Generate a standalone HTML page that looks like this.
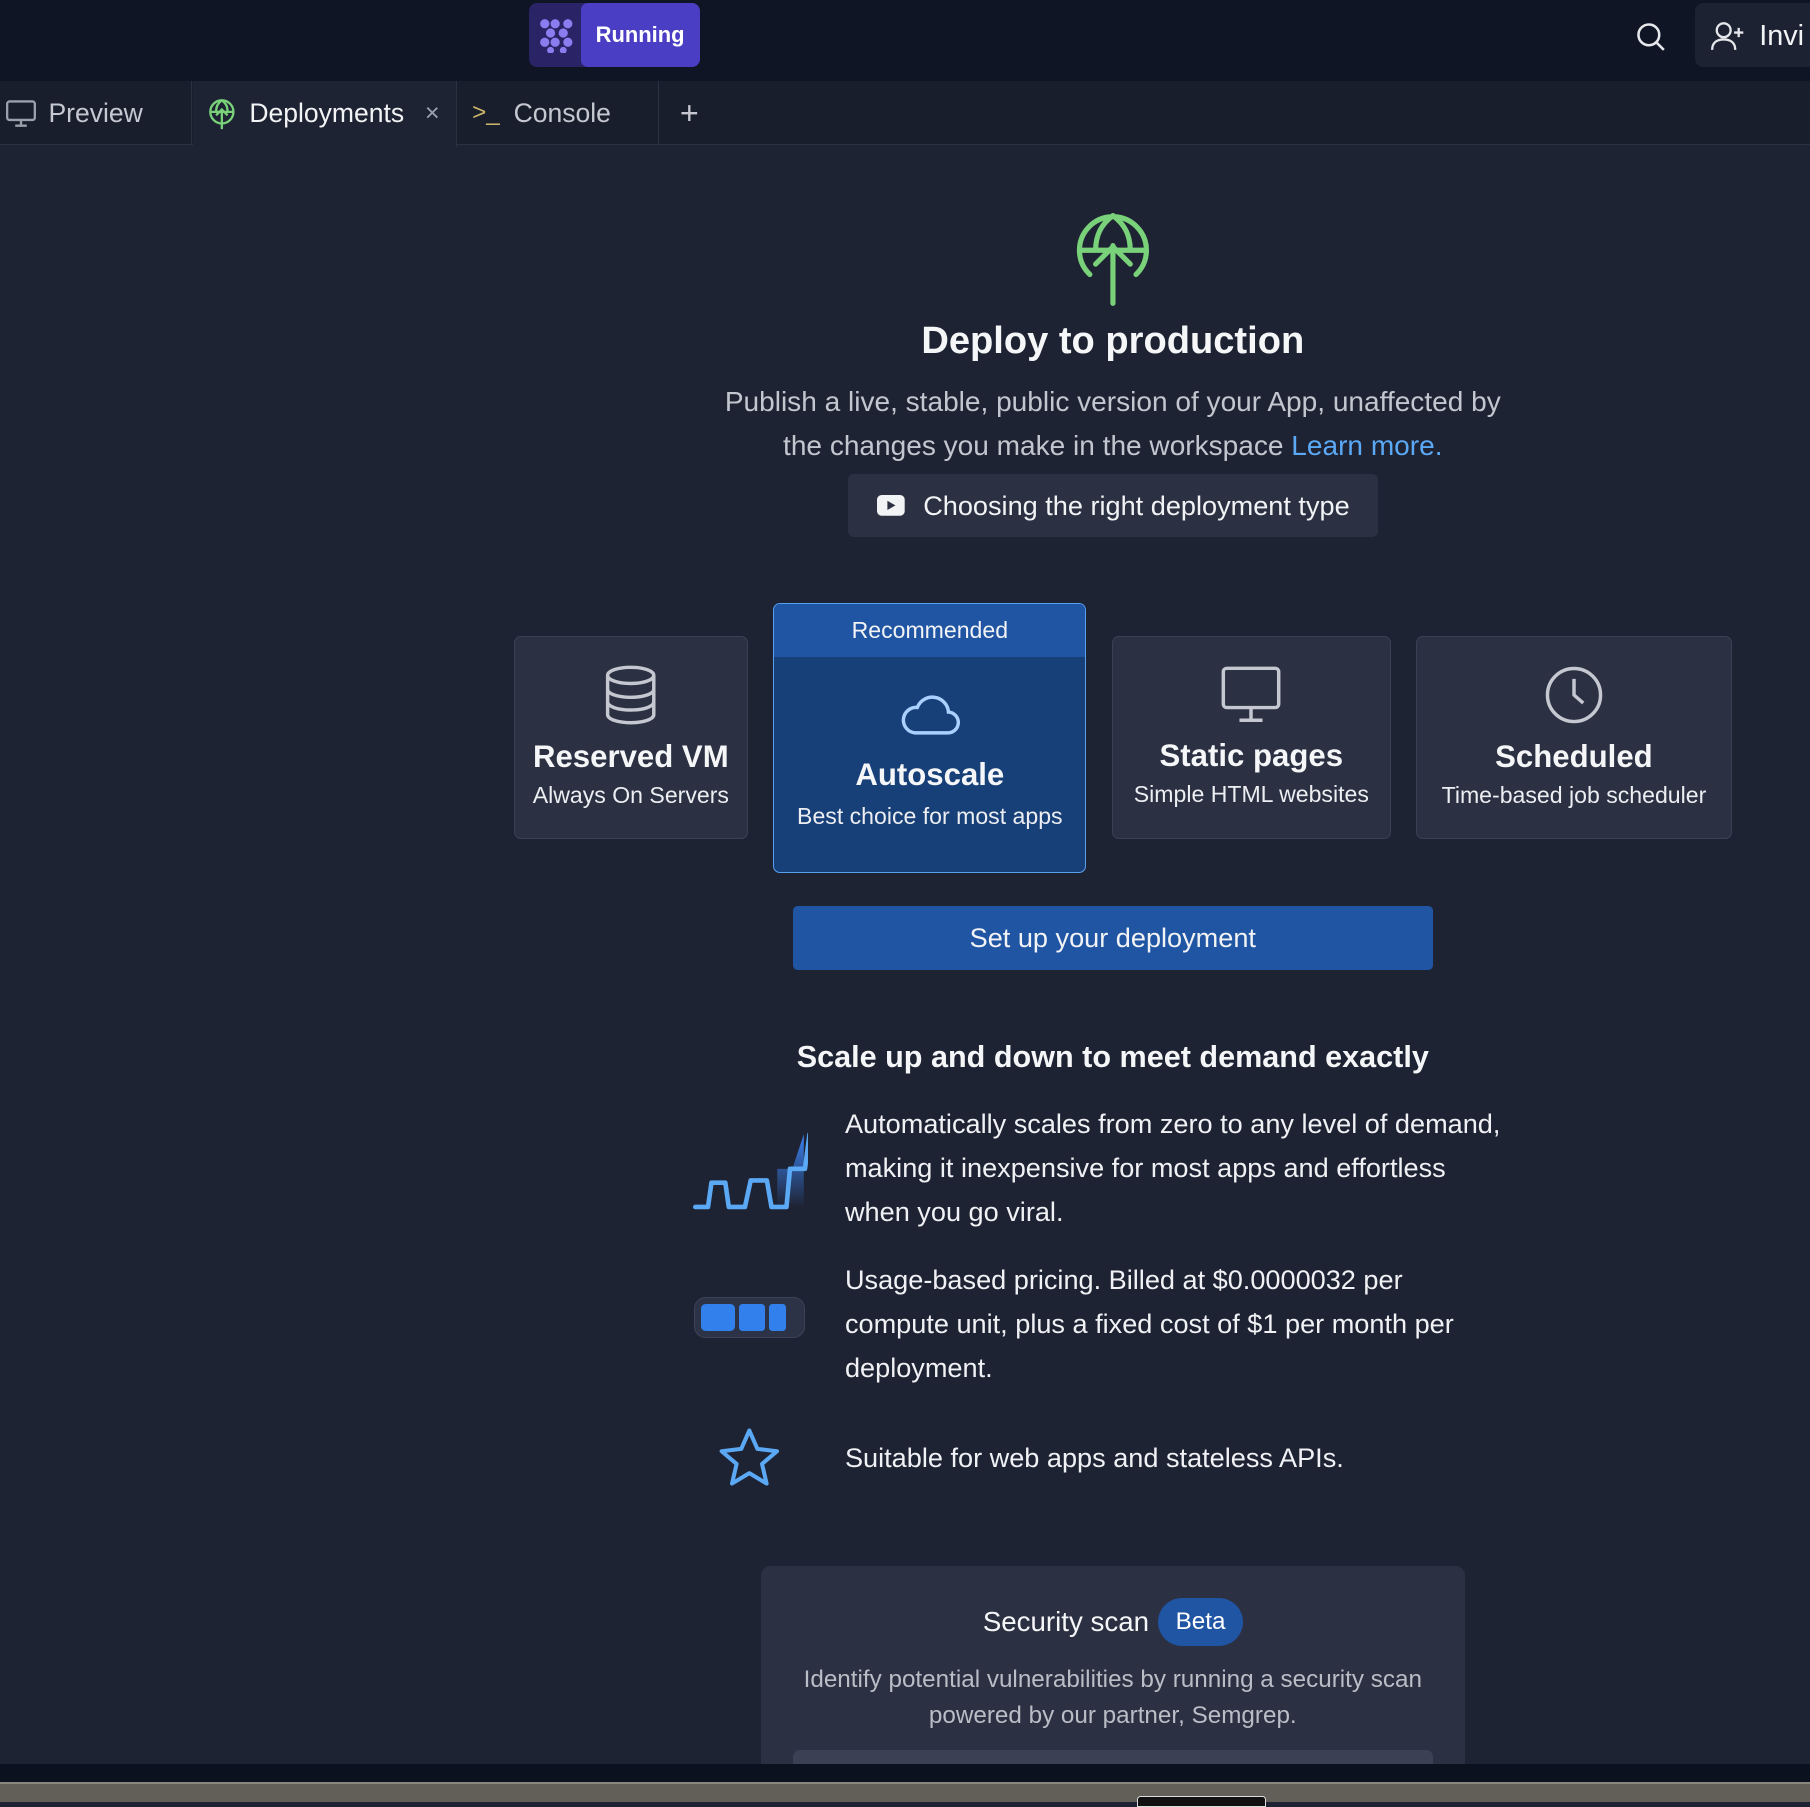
<!DOCTYPE html>
<html><head><meta charset="utf-8"><style>
html{zoom:1.15434}
body{margin:0;width:1568px;height:1561px;overflow:hidden;background:#1e2333;font-family:"Liberation Sans",sans-serif;color:#f2f3f5;position:relative}
.a{position:absolute}
.top{left:0;top:0;width:1568px;height:70px;background:#0f1524}
.tabs{left:0;top:70px;width:1568px;height:56px;background:#191e2c;border-bottom:1px solid #2b3142;box-sizing:border-box}
.tab{top:0;height:56px;display:flex;align-items:center;font-size:23px;color:#c5c8d0;box-sizing:border-box}
.c{text-align:center}
.card{background:#2b3042;border:1.5px solid #3b4154;border-radius:6px;box-sizing:border-box;text-align:center}
.card h3{margin:0;font-size:27px;font-weight:bold;color:#f5f6f8}
.card p{margin:6px 0 0;font-size:20px;color:#eceef2}
.feat{left:732px;font-size:23.5px;line-height:38px;color:#f0f1f4;width:575px}
</style></head><body>
<div class="a top"></div>
<div class="a" style="left:458px;top:3px;width:148px;height:55px;border-radius:7px;background:#2a2466;overflow:hidden">
 <div class="a" style="left:45px;top:0;width:103px;height:55px;background:#4a3fc4;border-radius:6px;color:#fff;font-weight:bold;font-size:19px;line-height:55px;text-align:center">Running</div>
 <svg class="a" style="left:9px;top:13px" width="30" height="30" viewBox="0 0 30 30" fill="#8b7cf0"><circle cx="5" cy="5" r="4"/><circle cx="14" cy="5" r="4"/><circle cx="25" cy="5" r="4"/><circle cx="10" cy="13" r="4"/><circle cx="21" cy="13" r="4"/><circle cx="5" cy="21" r="4"/><circle cx="14" cy="21" r="4"/><circle cx="25" cy="21" r="4"/><circle cx="10" cy="28" r="3"/><circle cx="21" cy="28" r="3"/></svg>
</div>
<svg class="a" style="left:1416px;top:18px" width="28" height="28" viewBox="0 0 28 28" fill="none" stroke="#e6e8ec" stroke-width="2.2"><circle cx="12" cy="12" r="9"/><path d="M19 19l6 6"/></svg>
<div class="a" style="left:1468px;top:3px;width:110px;height:55px;background:#1c2232;border-radius:7px"></div>
<svg class="a" style="left:1482px;top:18px" width="30" height="26" viewBox="0 0 30 26" fill="none" stroke="#e6e8ec" stroke-width="2"><circle cx="11" cy="8" r="6"/><path d="M1 25c0-6 4-9 10-9s10 3 10 9M24 6v8M20 10h8"/></svg>
<div class="a" style="left:1524px;top:17px;font-size:25px;color:#f2f3f5">Invi</div>

<div class="a tabs"></div>
<div class="a tab" style="left:0;top:70px;width:166px;border-right:1px solid #2b3142;padding-left:5px">
 <svg width="26" height="26" viewBox="0 0 26 26" fill="none" stroke="#9aa0ac" stroke-width="2"><rect x="1" y="3" width="24" height="16" rx="2"/><path d="M13 19v4M8 24h10"/></svg><span style="margin-left:11px">Preview</span></div>
<div class="a tab" style="left:167px;top:70px;width:229px;height:57px;background:#1e2333;border-right:1px solid #2b3142;padding-left:13px;color:#f2f3f5">
 <svg width="24" height="28" viewBox="0 0 24 28" fill="none" stroke="#79d279" stroke-width="2"><circle cx="12" cy="12" r="10"/><path d="M12 2c-4 3-5 6-5 10M12 2c4 3 5 6 5 10M2 12h20M12 27V10M7 15l5-5 5 5"/></svg><span style="margin-left:12px">Deployments</span><span style="margin-left:18px;color:#9aa0ac;font-size:22px">×</span></div>
<div class="a tab" style="left:397px;top:70px;width:174px;border-right:1px solid #2b3142;padding-left:12px">
 <span style="color:#c9b46a;font-size:21px">&gt;_</span><span style="margin-left:12px">Console</span></div>
<div class="a" style="left:589px;top:82px;font-size:28px;color:#c5c8d0">+</div>

<svg class="a" style="left:932px;top:183px" width="64" height="82" viewBox="0 0 64 82" fill="none" stroke="#79d279" stroke-width="4.5" stroke-linecap="round"><path d="M12 55A29 29 0 1 1 52 55M32 4c-11 8-15 18-15 30M32 4c11 8 15 18 15 30M3 34h58M32 80V30M17 46l15-15 15 15"/></svg>
<div class="a c" style="left:0;top:277px;width:1928px;font-size:33px;font-weight:bold;color:#f5f6f8">Deploy to production</div>
<div class="a c" style="left:564px;top:329px;width:800px;font-size:24.3px;line-height:38.5px;color:#c2c6cf">Publish a live, stable, public version of your App, unaffected by<br>the changes you make in the workspace <span style="color:#5ba8f5">Learn more.</span></div>
<div class="a" style="left:735px;top:411px;width:459px;height:54px;background:#2b3142;border-radius:5px;display:flex;align-items:center;justify-content:center;font-size:23.5px;color:#f2f3f5">
 <svg width="24" height="18" viewBox="0 0 24 18"><rect width="24" height="18" rx="4" fill="#f2f3f5"/><path d="M9 5l7 4-7 4z" fill="#2b3142"/></svg><span style="margin-left:16px">Choosing the right deployment type</span></div>

<div class="a card" style="left:445px;top:551px;width:203px;height:176px">
 <svg style="margin-top:24px" width="48" height="52" viewBox="0 0 48 52" fill="none" stroke="#c5c8d0" stroke-width="3"><ellipse cx="24" cy="9" rx="20" ry="7"/><path d="M4 9v34c0 4 9 7 20 7s20-3 20-7V9M4 21c0 4 9 7 20 7s20-3 20-7M4 32c0 4 9 7 20 7s20-3 20-7"/></svg>
 <h3 style="margin-top:8px">Reserved VM</h3><p>Always On Servers</p></div>
<div class="a card" style="left:670px;top:522px;width:271px;height:234px;background:#173f78;border-color:#5aa0f0;overflow:hidden">
 <div style="height:46px;background:#1f55a3;line-height:46px;font-size:20px;color:#f2f3f5">Recommended</div>
 <svg style="margin-top:28px" width="52" height="42" viewBox="0 0 52 42" fill="none" stroke="#a9d0ff" stroke-width="3"><path d="M13 38h28a9 9 0 0 0 1-18 14 14 0 0 0-27-4A11 11 0 0 0 13 38z"/></svg>
 <h3 style="margin-top:13px">Autoscale</h3><p style="margin-top:8px">Best choice for most apps</p></div>
<div class="a card" style="left:963px;top:551px;width:242px;height:176px">
 <svg style="margin-top:25px" width="52" height="50" viewBox="0 0 52 50" fill="none" stroke="#c5c8d0" stroke-width="3"><rect x="2" y="2" width="48" height="34" rx="3"/><path d="M26 36v10M16 47h20"/></svg>
 <h3 style="margin-top:8px">Static pages</h3><p>Simple HTML websites</p></div>
<div class="a card" style="left:1227px;top:551px;width:273px;height:176px">
 <svg style="margin-top:24px" width="52" height="52" viewBox="0 0 52 52" fill="none" stroke="#c5c8d0" stroke-width="3"><circle cx="26" cy="26" r="23"/><path d="M26 12v14l8 7"/></svg>
 <h3 style="margin-top:8px">Scheduled</h3><p>Time-based job scheduler</p></div>

<div class="a c" style="left:687px;top:785px;width:554px;height:55px;background:#1f55a3;border-radius:4px;line-height:55px;font-size:23.5px;color:#f2f3f5">Set up your deployment</div>

<div class="a c" style="left:0;top:901px;width:1928px;font-size:26.5px;font-weight:bold;color:#f5f6f8">Scale up and down to meet demand exactly</div>

<svg class="a" style="left:600px;top:975px" width="100" height="80" viewBox="0 0 100 80"><defs><linearGradient id="g" x1="0" y1="0" x2="0" y2="1"><stop offset="0" stop-color="#3b82f0"/><stop offset="1" stop-color="#1e2333"/></linearGradient></defs><path d="M73 71V38h13l10-30v63z" fill="url(#g)"/><path d="M2 71h11l3-21h12l3 21h14l5-23h14l4 23h13l3-33h13l4-30" fill="none" stroke="#5ba8f5" stroke-width="4" stroke-linejoin="round" stroke-linecap="round"/></svg>
<div class="a feat" style="top:955px">Automatically scales from zero to any level of demand, making it inexpensive for most apps and effortless when you go viral.</div>

<div class="a" style="left:601px;top:1124px;width:96px;height:35px;border-radius:10px;background:#2d3346;border:1.5px solid #3d4357;box-sizing:border-box"></div>
<div class="a" style="left:607px;top:1130px;width:30px;height:23px;background:#3280ec;border-radius:4px"></div>
<div class="a" style="left:640px;top:1130px;width:23px;height:23px;background:#3280ec;border-radius:3px"></div>
<div class="a" style="left:666px;top:1130px;width:15px;height:23px;background:#3280ec;border-radius:3px"></div>
<div class="a feat" style="top:1090px">Usage-based pricing. Billed at $0.0000032 per compute unit, plus a fixed cost of $1 per month per deployment.</div>

<svg class="a" style="left:621px;top:1236px" width="56" height="52" viewBox="0 0 56 52"><path d="M28 3l7 16 17 2-13 11 4 17-15-9-15 9 4-17L4 21l17-2z" fill="none" stroke="#5ba8f5" stroke-width="3.5" stroke-linejoin="round"/></svg>
<div class="a feat" style="top:1244px">Suitable for web apps and stateless APIs.</div>

<div class="a" style="left:659px;top:1357px;width:610px;height:180px;background:#2b3042;border-radius:8px 8px 0 0"></div>
<div class="a" style="left:0;top:1384px;width:1928px;display:flex;justify-content:center;align-items:center">
 <span style="font-size:24px;color:#f5f6f8">Security scan</span><span style="margin-left:8px;background:#1f55a3;border-radius:22px;padding:0 15px;height:42px;line-height:42px;font-size:21px;color:#fff">Beta</span></div>
<div class="a c" style="left:659px;top:1440px;width:610px;font-size:21px;line-height:31px;color:#b9bdc6">Identify potential vulnerabilities by running a security scan<br>powered by our partner, Semgrep.</div>
<div class="a" style="left:687px;top:1516px;width:554px;height:20px;background:#3b4055;border-radius:6px 6px 0 0"></div>

<div class="a" style="left:0;top:1528px;width:1568px;height:17px;background:#0c1120"></div>
<div class="a" style="left:0;top:1544px;width:1568px;height:17px;background:#615f58;border-top:2px solid #8a877c;box-sizing:border-box"></div>
<div class="a" style="left:985px;top:1556px;width:110px;height:8px;background:#111;border:1px solid #ddd;border-radius:3px 3px 0 0"></div>
</body></html>
